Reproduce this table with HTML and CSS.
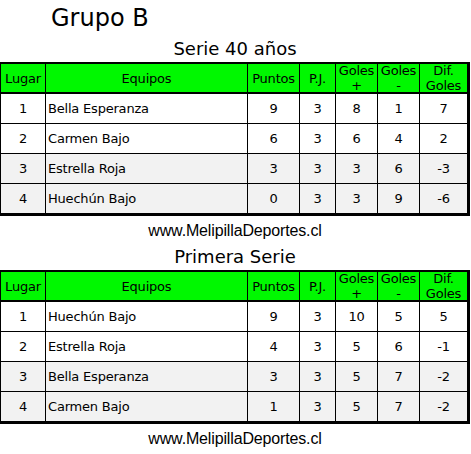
FILE: index.html
```html
<!DOCTYPE html>
<html lang="es">
<head>
<meta charset="utf-8">
<title>Grupo B</title>
<link rel="stylesheet" href="styles.css">
</head>
<body>
<div class="page">
  <h1 class="group-title">Grupo B</h1>

  <section class="serie">
    <h2 class="serie-title">Serie 40 años</h2>
    <table class="standings">
      <colgroup>
        <col class="c-pos"><col class="c-team"><col class="c-pts"><col class="c-pj"><col class="c-gf"><col class="c-gc"><col class="c-dif">
      </colgroup>
      <thead>
        <tr><th>Lugar</th><th>Equipos</th><th>Puntos</th><th>P.J.</th><th><span class="stack">Goles<br>+</span></th><th><span class="stack">Goles<br>-</span></th><th><span class="stack">Dif.<br>Goles</span></th></tr>
      </thead>
      <tbody>
        <tr><td>1</td><td class="team">Bella Esperanza</td><td>9</td><td>3</td><td>8</td><td>1</td><td>7</td></tr>
        <tr><td>2</td><td class="team">Carmen Bajo</td><td>6</td><td>3</td><td>6</td><td>4</td><td>2</td></tr>
        <tr class="alt"><td>3</td><td class="team">Estrella Roja</td><td>3</td><td>3</td><td>3</td><td>6</td><td>-3</td></tr>
        <tr class="alt"><td>4</td><td class="team">Huechún Bajo</td><td>0</td><td>3</td><td>3</td><td>9</td><td>-6</td></tr>
      </tbody>
    </table>
    <p class="site">www.MelipillaDeportes.cl</p>
  </section>

  <section class="serie">
    <h2 class="serie-title">Primera Serie</h2>
    <table class="standings">
      <colgroup>
        <col class="c-pos"><col class="c-team"><col class="c-pts"><col class="c-pj"><col class="c-gf"><col class="c-gc"><col class="c-dif">
      </colgroup>
      <thead>
        <tr><th>Lugar</th><th>Equipos</th><th>Puntos</th><th>P.J.</th><th><span class="stack">Goles<br>+</span></th><th><span class="stack">Goles<br>-</span></th><th><span class="stack">Dif.<br>Goles</span></th></tr>
      </thead>
      <tbody>
        <tr><td>1</td><td class="team">Huechún Bajo</td><td>9</td><td>3</td><td>10</td><td>5</td><td>5</td></tr>
        <tr><td>2</td><td class="team">Estrella Roja</td><td>4</td><td>3</td><td>5</td><td>6</td><td>-1</td></tr>
        <tr class="alt"><td>3</td><td class="team">Bella Esperanza</td><td>3</td><td>3</td><td>5</td><td>7</td><td>-2</td></tr>
        <tr class="alt"><td>4</td><td class="team">Carmen Bajo</td><td>1</td><td>3</td><td>5</td><td>7</td><td>-2</td></tr>
      </tbody>
    </table>
    <p class="site">www.MelipillaDeportes.cl</p>
  </section>
</div>
</body>
</html>
```

FILE: styles.css
```css
html, body {
  margin: 0;
  padding: 0;
  background: #ffffff;
}

.page {
  width: 471px;
  color: #000;
  font-family: "DejaVu Sans", Verdana, sans-serif;
}

.group-title {
  margin: 0;
  padding: 3px 0 0 51px;
  font-size: 24px;
  line-height: 30px;
  font-weight: normal;
}

.serie-title {
  margin: 5px 0 2px 0;
  font-size: 18px;
  line-height: 22px;
  font-weight: normal;
  text-align: center;
  width: 470px;
}

.standings {
  border-collapse: separate;
  border-spacing: 0;
  table-layout: fixed;
  width: 470px;
  border-style: solid;
  border-color: #000;
  border-width: 2px 2px 2px 1px;
  font-size: 13px;
  letter-spacing: -0.2px;
}

.c-pos { width: 45px; }
.c-team { width: 202px; }
.c-pts { width: 52px; }
.c-pj { width: 36px; }
.c-gf { width: 42px; }
.c-gc { width: 42px; }
.c-dif { width: 48px; }

.standings th,
.standings td {
  padding: 0;
  border-right: 1px solid #000;
  border-bottom: 1px solid #000;
  text-align: center;
  vertical-align: middle;
  font-weight: normal;
}

.standings th {
  background: #00f800;
  height: 28px;
  line-height: 15px;
  border-bottom-width: 2px;
}

.standings th .stack {
  display: block;
  margin: -1px 0 -1px 0;
}

.standings td {
  height: 29px;
  line-height: 16px;
}

.standings td.team {
  text-align: left;
  padding-left: 2px;
}

.standings tr.alt td {
  background: #f2f2f2;
}

.site {
  margin: 5px 0 0 0;
  width: 470px;
  text-align: center;
  font-family: "Liberation Sans", Arial, sans-serif;
  font-size: 16px;
  line-height: 20px;
  letter-spacing: -0.15px;
}
```
